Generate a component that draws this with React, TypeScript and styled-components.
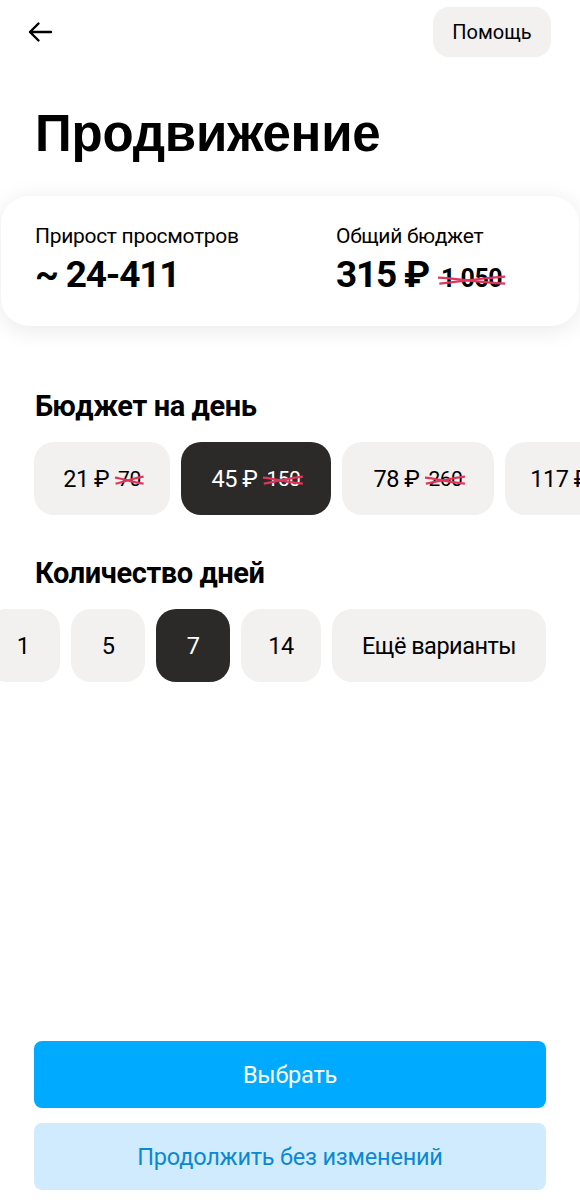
import React from "react";
import styled, { createGlobalStyle } from "styled-components";

const Global = createGlobalStyle`
  html, body { margin: 0; padding: 0; background: #fff; }
  body { font-family: Roboto, "Noto Sans", Arial, sans-serif; color: #000; }
  * { box-sizing: border-box; }
`;

const Page = styled.div`
  width: 580px;
  height: 1200px;
  display: flex;
  flex-direction: column;
  overflow: hidden;
  background: #fff;
`;

const TopBar = styled.div`
  display: flex;
  justify-content: space-between;
  align-items: center;
  padding: 7px 29px 0 26px;
  height: 57px;
`;

const BackButton = styled.button`
  border: 0;
  background: none;
  padding: 0;
  width: 28px;
  height: 28px;
  display: flex;
  align-items: center;
  justify-content: center;
`;

const HelpButton = styled.button`
  border: 0;
  background: #f2f1f0;
  border-radius: 16px;
  height: 50px;
  width: 118px;
  font-family: Roboto, sans-serif;
  font-size: 20px;
  color: #000;
`;

const Title = styled.h1`
  margin: 47px 0 0 35px;
  font-family: "Liberation Sans", Arial, sans-serif;
  font-weight: 700;
  font-size: 51px;
  line-height: 60px;
  letter-spacing: -0.2px;
`;

const SummaryCard = styled.div`
  margin: 32px 1px 0 1px;
  height: 130px;
  border-radius: 28px;
  background: #fff;
  box-shadow: 0 4px 24px rgba(0, 0, 0, 0.09);
  display: grid;
  grid-template-columns: 301px 1fr;
  padding: 27px 0 0 34px;
`;

const Stat = styled.div`
  display: flex;
  flex-direction: column;
  gap: 5px;
`;

const StatLabel = styled.div`
  font-size: 21px;
  line-height: 26px;
  letter-spacing: -0.3px;
`;

const StatValue = styled.div`
  display: flex;
  align-items: baseline;
  gap: 12px;
  font-family: Roboto, sans-serif;
  font-weight: 700;
  font-size: 37px;
  line-height: 42px;
  letter-spacing: -1.2px;
`;

const OldPriceBig = styled.span`
  position: relative;
  font-size: 25px;
  font-weight: 700;
  letter-spacing: -0.5px;
`;

const SectionTitle = styled.h2`
  margin: 0 0 0 35px;
  font-family: Roboto, sans-serif;
  font-weight: 700;
  font-size: 29px;
  line-height: 34px;
  letter-spacing: -0.4px;
`;

const BudgetSection = styled.section`
  margin-top: 63px;
  display: flex;
  flex-direction: column;
  gap: 19px;
`;

const DaysSection = styled.section`
  margin-top: 41px;
  display: flex;
  flex-direction: column;
  gap: 19px;
`;

const ChipRow = styled.div<{ $offset: number }>`
  display: flex;
  gap: 11px;
  margin-left: ${(p) => p.$offset}px;
  white-space: nowrap;
`;

const Chip = styled.div<{ $w: number; $active?: boolean }>`
  flex: 0 0 ${(p) => p.$w}px;
  height: 73px;
  border-radius: 20px;
  background: ${(p) => (p.$active ? "#2b2a29" : "#f2f1f0")};
  color: ${(p) => (p.$active ? "#fff" : "#000")};
  display: flex;
  align-items: center;
  justify-content: center;
  gap: 9px;
  font-family: Roboto, sans-serif;
  font-size: 23.5px;
  letter-spacing: -0.5px;
`;

const OldPrice = styled.span`
  position: relative;
  font-size: 21px;
`;

const Scribble = styled.svg`
  position: absolute;
  left: -3px;
  top: 50%;
  width: calc(100% + 6px);
  height: 12px;
  transform: translateY(-45%);
  overflow: visible;
`;

const Spacer = styled.div`
  flex: 1;
`;

const Actions = styled.div`
  display: flex;
  flex-direction: column;
  gap: 15px;
  padding: 0 34px 10px 34px;
`;

const ActionButton = styled.button<{ $primary?: boolean }>`
  height: 67px;
  border: 0;
  border-radius: 8px;
  background: ${(p) => (p.$primary ? "#00aaff" : "#d0ebfd")};
  color: ${(p) => (p.$primary ? "#fff" : "#0a88d4")};
  font-family: Roboto, sans-serif;
  font-size: 23.5px;
  letter-spacing: -0.2px;
`;

const Strike: React.FC<{ children: React.ReactNode; big?: boolean }> = ({ children, big }) => {
  const Wrap = big ? OldPriceBig : OldPrice;
  return (
    <Wrap>
      {children}
      <Scribble viewBox="0 0 100 12" preserveAspectRatio="none">
        <path d="M0 4 C 30 5, 60 9, 100 10" stroke="#e3345b" strokeWidth="2.2" fill="none" vectorEffect="non-scaling-stroke" />
        <path d="M2 10 C 35 8, 70 4, 100 3" stroke="#e3345b" strokeWidth="2.2" fill="none" vectorEffect="non-scaling-stroke" />
      </Scribble>
    </Wrap>
  );
};

const budgets = [
  { v: "21 ₽", o: "70", w: 136 },
  { v: "45 ₽", o: "150", w: 150, active: true },
  { v: "78 ₽", o: "260", w: 152 },
  { v: "117 ₽", o: "390", w: 152 },
];

const days = [
  { v: "1", w: 74 },
  { v: "5", w: 74 },
  { v: "7", w: 74, active: true },
  { v: "14", w: 80 },
  { v: "Ещё варианты", w: 214 },
];

export default function App() {
  return (
    <Page>
      <Global />
      <TopBar>
        <BackButton aria-label="Назад">
          <svg width="26" height="22" viewBox="0 0 26 22" fill="none">
            <path d="M24 11H3M11.5 2.5L3 11l8.5 8.5" stroke="#000" strokeWidth="2.4" strokeLinecap="round" strokeLinejoin="round" />
          </svg>
        </BackButton>
        <HelpButton>Помощь</HelpButton>
      </TopBar>
      <Title>Продвижение</Title>
      <SummaryCard>
        <Stat>
          <StatLabel>Прирост просмотров</StatLabel>
          <StatValue>~ 24-411</StatValue>
        </Stat>
        <Stat>
          <StatLabel>Общий бюджет</StatLabel>
          <StatValue>
            315 ₽ <Strike big>1 050</Strike>
          </StatValue>
        </Stat>
      </SummaryCard>
      <BudgetSection>
        <SectionTitle>Бюджет на день</SectionTitle>
        <ChipRow $offset={34}>
          {budgets.map((b) => (
            <Chip key={b.v} $w={b.w} $active={b.active}>
              {b.v} <Strike>{b.o}</Strike>
            </Chip>
          ))}
        </ChipRow>
      </BudgetSection>
      <DaysSection>
        <SectionTitle>Количество дней</SectionTitle>
        <ChipRow $offset={-14}>
          {days.map((d) => (
            <Chip key={d.v} $w={d.w} $active={d.active}>
              {d.v}
            </Chip>
          ))}
        </ChipRow>
      </DaysSection>
      <Spacer />
      <Actions>
        <ActionButton $primary>Выбрать</ActionButton>
        <ActionButton>Продолжить без изменений</ActionButton>
      </Actions>
    </Page>
  );
}
